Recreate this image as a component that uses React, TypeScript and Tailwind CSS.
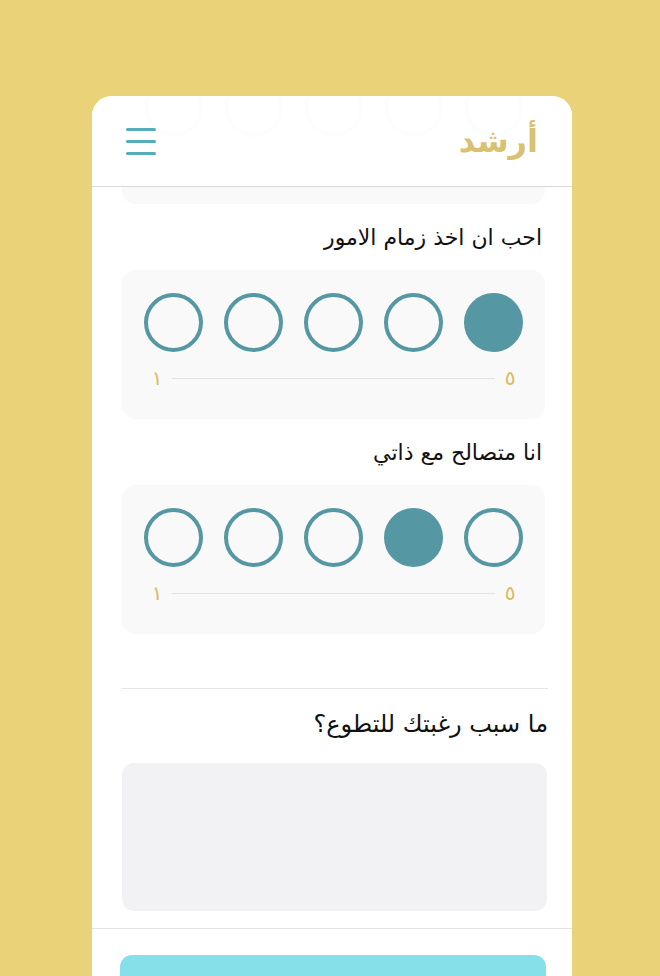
import React from 'react'

const font = { fontFamily: '"DejaVu Sans", "Noto Sans", sans-serif' }

function Circles({ selected }: { selected: number }) {
  // rtl: first item is 5 on the right
  return (
    <div dir="rtl" className="flex justify-between">
      {[5, 4, 3, 2, 1].map((n) => (
        <span
          key={n}
          className={`h-[59px] w-[59px] rounded-full border-[4px] border-[#5598a3] ${
            n === selected ? 'bg-[#5598a3]' : 'bg-transparent'
          }`}
        />
      ))}
    </div>
  )
}

function ScaleCard({ selected }: { selected: number }) {
  return (
    <div className="h-[149px] rounded-[14px] bg-[#f9f9f9] px-[22px] pt-[23px]">
      <Circles selected={selected} />
      <div dir="rtl" className="mt-[14px] flex h-[24px] items-center text-[20px] text-[#d9bb62]">
        <span className="w-[26px] text-center">٥</span>
        <span className="mx-[2px] h-px flex-1 bg-[#e3e3e3]" />
        <span className="w-[26px] text-center">١</span>
      </div>
    </div>
  )
}

function Label({ text }: { text: string }) {
  return (
    <div dir="rtl" className="flex h-[66px] items-center pr-[3px] text-[22px] text-[#111]">
      {text}
    </div>
  )
}

export default function App() {
  return (
    <div style={font} className="h-[976px] overflow-hidden bg-[#e9d277] pt-[96px]">
      <div className="relative ml-[92px] h-[880px] w-[480px] overflow-hidden rounded-t-[20px] bg-white">
        {/* header over scrolled content */}
        <div className="absolute inset-x-0 top-0 z-10 flex h-[91px] items-center justify-between border-b border-[#d9d9d9] bg-white/[0.985] pl-[34px] pr-[34px]">
          <div className="flex w-[30px] flex-col gap-[9px]">
            <span className="h-[3px] rounded-full bg-[#56acb8]" />
            <span className="h-[3px] rounded-full bg-[#56acb8]" />
            <span className="h-[3px] rounded-full bg-[#56acb8]" />
          </div>
          <span className="text-[32px] font-bold leading-none text-[#d8c171]">أرشد</span>
        </div>

        <div className="mt-[-41px] pl-[30px] pr-[27px]">
          <ScaleCard selected={0} />
          <Label text="احب ان اخذ زمام الامور" />
          <ScaleCard selected={5} />
          <Label text="انا متصالح مع ذاتي" />
          <ScaleCard selected={4} />

          <div className="mr-[-3px] mt-[54px] border-t border-[#e4e4e4] pt-[20px]">
            <div dir="rtl" className="h-[30px] text-[24px] leading-[30px] text-[#111]">
              ما سبب رغبتك للتطوع؟
            </div>
            <div className="mr-[1px] mt-[24px] h-[148px] rounded-[12px] bg-[#f2f2f4]" />
          </div>
          <div className="h-[17px]" />
        </div>
        <div className="border-t border-[#e2e2e2] pl-[28px] pr-[26px] pt-[26px]">
          <div className="h-[56px] rounded-[12px] bg-[#86e0ea]" />
        </div>
      </div>
    </div>
  )
}
